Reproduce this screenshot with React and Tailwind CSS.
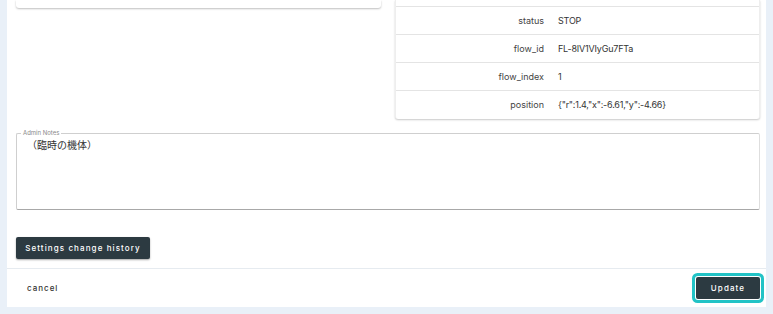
import React from "react";

const rows = [
  { label: "status", value: "STOP" },
  { label: "flow_id", value: "FL-8IV1VIyGu7FTa" },
  { label: "flow_index", value: "1" },
  { label: "position", value: '{"r":1.4,"x":-6.61,"y":-4.66}' },
];

function App() {
  return (
    <div
      className="w-[773px] h-[314px] bg-[#e9f0f8] px-[7px] overflow-hidden"
      style={{ fontFamily: "Inter, 'Noto Sans CJK JP', sans-serif" }}
    >
      <div className="bg-white h-[307px] flex flex-col">
        {/* Top cards (scrolled) */}
        <div className="flex gap-[14px] pl-[9px] pr-[6px]">
          <div className="w-[365px] h-[8px] self-start bg-white rounded-b-[3px] shadow-[0_1px_2px_rgba(0,0,0,0.25)]" />
          <div className="w-[365px] bg-white rounded-b-[3px] shadow-[0_1px_2px_rgba(0,0,0,0.22)] border-x border-[#eeeeee]">
            <div className="h-[7px] border-b border-[#e4e4e4]" />
            {rows.map((r, i) => (
              <div
                key={r.label}
                className={`h-[28px] flex items-center text-[9px] ${i < rows.length - 1 ? "border-b border-[#e4e4e4]" : ""}`}
              >
                <div className="w-[148px] text-right text-[#444]">{r.label}</div>
                <div className="pl-[14px] text-[#333] tracking-[-0.2px]">{r.value}</div>
              </div>
            ))}
          </div>
        </div>

        {/* Admin notes */}
        <fieldset className="mt-[10px] ml-[9px] mr-[6px] h-[83px] border border-[#cfcfcf] border-b-[#a8a8a8] border-r-[#dedede] rounded-[2px] px-[10px]">
          <legend className="text-[6px] text-[#8a8a8a] px-[2px] -ml-[6px] leading-[8px]">Admin Notes</legend>
          <div className="text-[10px] text-[#333] leading-[12px] mt-[2px]">（臨時の機体）</div>
        </fieldset>

        <div className="pl-[9px] mt-[23px]">
          <button className="h-[22px] w-[134px] bg-[#2c3a41] text-white text-[8px] font-medium tracking-[1.1px] rounded-[2px] shadow-[0_1px_2px_rgba(0,0,0,0.35)]">
            Settings change history
          </button>
        </div>

        {/* Footer */}
        <div className="mt-[9px] border-t border-[#e6ebf0] h-[40px] flex items-center justify-between pl-[20px] pr-[6px]">
          <span className="text-[8px] text-[#333] tracking-[1px] font-medium">cancel</span>
          <button className="h-[22px] w-[64px] bg-[#2c3a41] text-white text-[8px] font-medium tracking-[1.1px] rounded-[2px] shadow-[0_0_0_1px_#ffffff,0_0_0_4px_#22c3c6]">
            Update
          </button>
        </div>
      </div>
    </div>
  );
}

export default App;
